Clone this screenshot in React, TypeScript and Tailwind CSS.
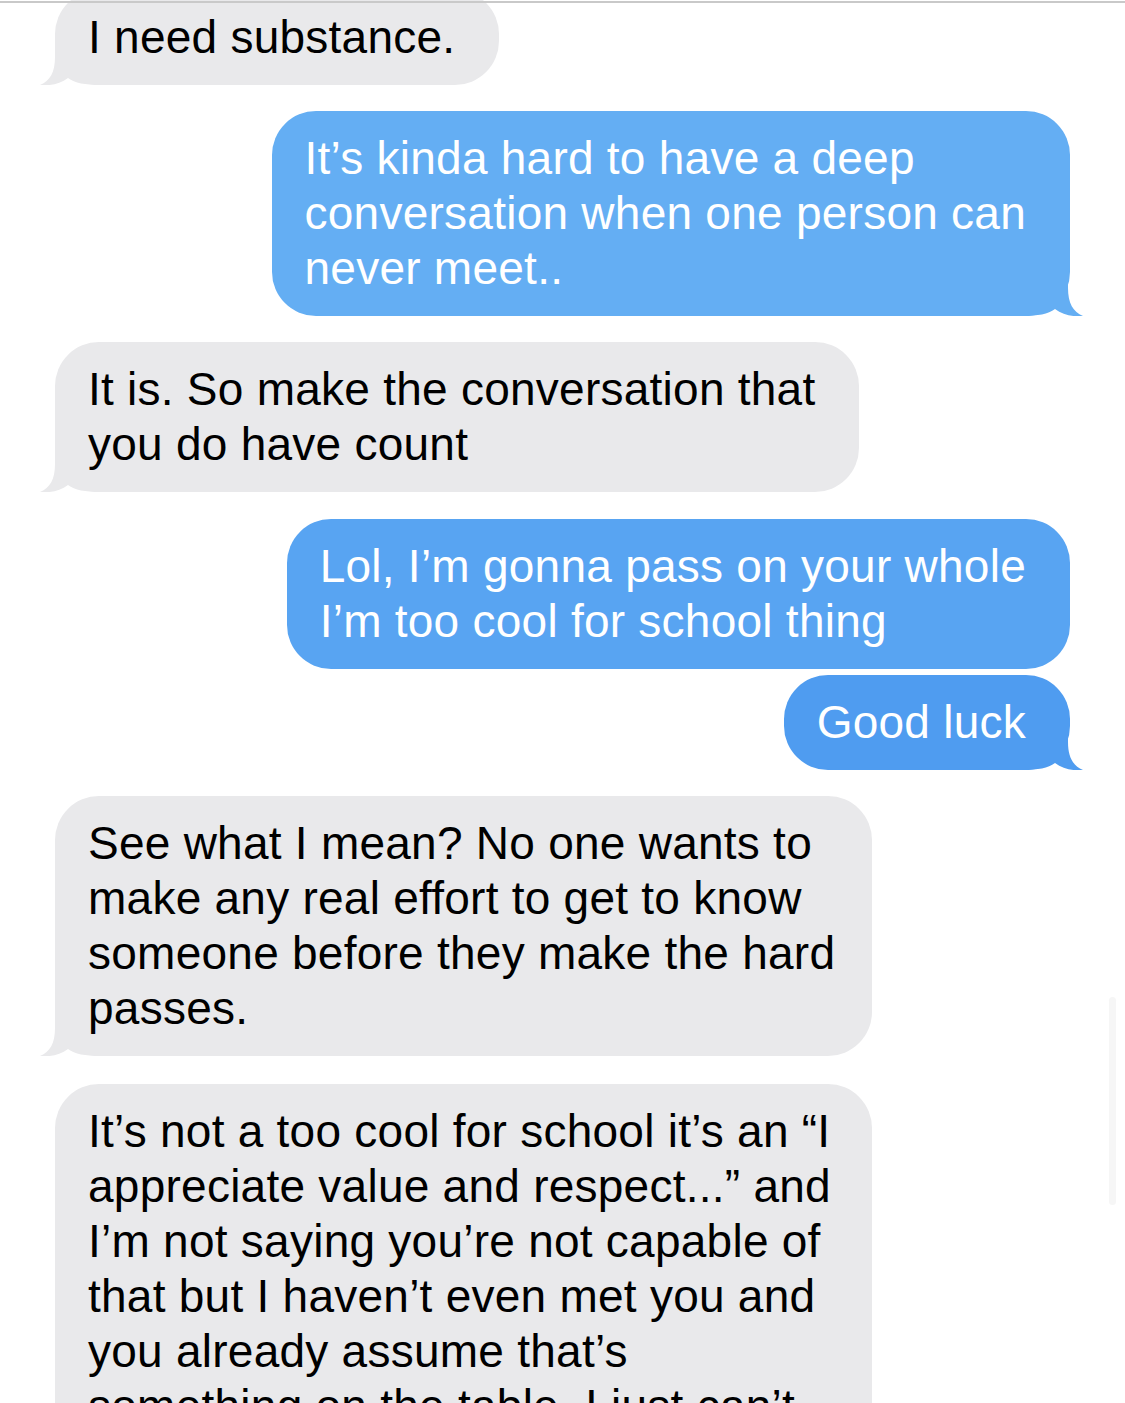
import React from "react";

type Side = "in" | "out";

interface Message {
  side: Side;
  lines: string[];
  color?: string;
  tail?: boolean;
  wide?: boolean;
  gap: string;
}

const messages: Message[] = [
  { side: "in", lines: ["I need substance."], tail: true, gap: "-mt-[10px]" },
  {
    side: "out",
    lines: ["It’s kinda hard to have a deep", "conversation when one person can", "never meet.."],
    color: "#64aef3",
    tail: true,
    gap: "mt-[26px]",
  },
  {
    side: "in",
    lines: ["It is. So make the conversation that", "you do have count"],
    tail: true,
    gap: "mt-[26px]",
  },
  {
    side: "out",
    lines: ["Lol, I’m gonna pass on your whole", "I’m too cool for school thing"],
    color: "#58a4f2",
    gap: "mt-[27px]",
  },
  { side: "out", lines: ["Good luck"], color: "#4f9cf0", tail: true, gap: "mt-[6px]" },
  {
    side: "in",
    lines: [
      "See what I mean? No one wants to",
      "make any real effort to get to know",
      "someone before they make the hard",
      "passes.",
    ],
    tail: true,
    wide: true,
    gap: "mt-[26px]",
  },
  {
    side: "in",
    lines: [
      "It’s not a too cool for school it’s an “I",
      "appreciate value and respect...” and",
      "I’m not saying you’re not capable of",
      "that but I haven’t even met you and",
      "you already assume that’s",
      "something on the table. I just can’t",
    ],
    wide: true,
    gap: "mt-[28px]",
  },
];

// iMessage style tail, drawn for the left side and mirrored for the right
const Tail = ({ fill, side }: { fill: string; side: Side }) => (
  <svg
    viewBox="-15 -50 60 50"
    width={60}
    height={50}
    className={
      side === "in"
        ? "absolute -left-[15px] bottom-0"
        : "absolute -right-[13px] bottom-0 -scale-x-100"
    }
  >
    <path
      d="M0 -50 L0 -28 C0 -13 -5 -4 -15 0 C-5 1 5 -1 13 -7 C20 -2 30 0 45 0 L45 -50 Z"
      fill={fill}
    />
  </svg>
);

const Bubble = ({ msg }: { msg: Message }) => {
  const isIn = msg.side === "in";
  const fill = isIn ? "#e9e9eb" : msg.color ?? "#5aa6f2";
  return (
    <div className={`flex ${isIn ? "justify-start pl-[55px]" : "justify-end pr-[55px]"} ${msg.gap}`}>
      <div
        className={`relative rounded-[44px] py-[20px] pl-[33px] pr-[44px] ${
          msg.wide ? "w-[817px]" : "w-fit"
        } ${isIn ? "text-black" : "text-white"}`}
        style={{ backgroundColor: fill }}
      >
        {msg.tail && <Tail fill={fill} side={msg.side} />}
        <div className="relative text-[46px] leading-[55px] tracking-[0.25px] whitespace-nowrap">
          {msg.lines.map((line, i) => (
            <div key={i}>{line}</div>
          ))}
        </div>
      </div>
    </div>
  );
};

export default function App() {
  return (
    <div
      className="relative h-[1403px] w-[1125px] overflow-hidden bg-white"
      style={{ fontFamily: '"Liberation Sans", Arial, sans-serif' }}
    >
      <div className="flex flex-col">
        {messages.map((m, i) => (
          <Bubble key={i} msg={m} />
        ))}
      </div>

      {/* top separator line */}
      <div className="absolute left-0 right-0 top-[1px] h-[2px] bg-[#c9c9c9]" />
      {/* faint scroll indicator */}
      <div className="absolute right-[9px] top-[997px] h-[208px] w-[7px] rounded-full bg-[#f6f6f6]" />
    </div>
  );
}
